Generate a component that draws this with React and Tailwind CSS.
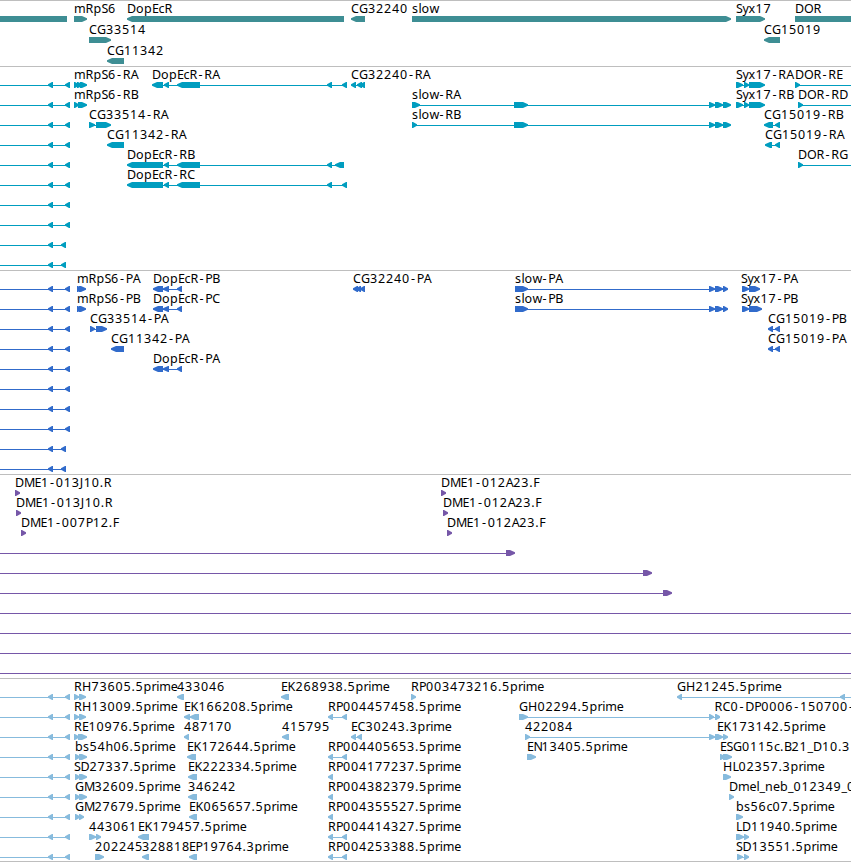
import React from 'react';

// Horizontal advance of each character used in the feature labels
const ADVANCE = {
  A: 7.5, B: 7.5, C: 8, D: 9, E: 6.5, F: 6.5, G: 9, H: 9.5, J: 4, K: 8, L: 6, M: 10.5,
  O: 9.5, P: 7, R: 8, S: 6.5, b: 8, c: 6, e: 7, h: 8, i: 3, l: 3, m: 11.5, n: 8,
  o: 8, p: 8, r: 4.8, s: 6.5, w: 9, x: 7, y: 6, '-': 6.8, '.': 4, _: 5.5
};

const R = 1;
const L = -1;

// feature: [label, label x, direction, exons]
const left = [null, 0, L, [[-20, -10], [48, 53], [65, 70]]];
const leftShort = [null, 0, L, [[-20, -10], [48, 53], [61, 66]]];
const slowTail = [[709, 715], [715, 723], [723, 731]];
const slowTailCds = [[709, 715], [715, 723], [723, 728]];
const syxExons = [[736, 743], [744, 749], [749, 765]];
const jump = [[328, 333], [342, 347]];
const through = [null, 0, R, [[-20, -10], [870, 880]]];

const tracks = [
  {
    name: 'genes',
    color: '#3e8e94',
    height: 'h-[66px]',
    rowHeight: 'h-[21px]',
    rows: [
      [
        [null, 0, L, [[-20, 67]]],
        ['mRpS6', 74, R, [[74, 87]]],
        ['DopEcR', 127, L, [[127, 344]]],
        ['CG32240', 351, L, [[351, 365]]],
        ['slow', 412, R, [[412, 731]]],
        ['Syx17', 736, R, [[736, 765]]],
        ['DOR', 795, R, [[795, 880]]]
      ],
      [
        ['CG33514', 89, R, [[89, 111]]],
        ['CG15019', 764, L, [[764, 780]]]
      ],
      [['CG11342', 107, L, [[107, 124]]]]
    ]
  },
  {
    name: 'transcripts',
    color: '#009dbf',
    height: 'h-[204px]',
    rowHeight: 'h-5',
    rows: [
      [
        left,
        ['mRpS6-RA', 74, R, [[74, 79], [77, 83], [80, 87]]],
        ['DopEcR-RA', 152, L, [[152, 163], [164, 169], [177, 200], [327, 332], [342, 347]]],
        ['CG32240-RA', 351, L, [[351, 356], [357, 362], [360, 365]]],
        ['Syx17-RA', 736, R, syxExons],
        ['DOR-RE', 795, R, [[795, 800], [870, 880]]]
      ],
      [
        left,
        ['mRpS6-RB', 74, R, [[74, 79], [78, 87]]],
        ['slow-RA', 412, R, [[412, 420], [514, 528], ...slowTail]],
        ['Syx17-RB', 736, R, syxExons],
        ['DOR-RD', 798, R, [[798, 803], [870, 880]]]
      ],
      [
        left,
        ['CG33514-RA', 89, R, [[89, 95], [96, 111]]],
        ['slow-RB', 412, R, [[412, 417], [514, 528], ...slowTail]],
        ['CG15019-RB', 764, L, [[764, 773], [775, 780]]]
      ],
      [
        left,
        ['CG11342-RA', 107, L, [[107, 124]]],
        ['CG15019-RA', 765, L, [[765, 772], [775, 780]]]
      ],
      [
        left,
        ['DopEcR-RB', 127, L, [[127, 163], [164, 169], [177, 200], [327, 332], [335, 344]]],
        ['DOR-RG', 798, R, [[798, 803], [870, 880]]]
      ],
      [
        left,
        ['DopEcR-RC', 127, L, [[127, 163], [164, 169], [177, 200], [327, 332], [342, 347]]]
      ],
      [left],
      [left],
      [leftShort],
      [leftShort]
    ]
  },
  {
    name: 'cds',
    color: '#316bcb',
    height: 'h-[204px]',
    rowHeight: 'h-5',
    rows: [
      [
        left,
        ['mRpS6-PA', 77, R, [[77, 82], [79, 86]]],
        ['DopEcR-PB', 153, L, [[153, 163], [163, 169], [177, 182]]],
        ['CG32240-PA', 353, L, [[353, 358], [356, 361], [360, 365]]],
        ['slow-PA', 515, R, [[515, 528], ...slowTailCds]],
        ['Syx17-PA', 741, R, [[742, 749], [749, 760]]]
      ],
      [
        left,
        ['mRpS6-PB', 77, R, [[77, 82], [79, 86]]],
        ['DopEcR-PC', 153, L, [[153, 163], [163, 169], [177, 182]]],
        ['slow-PB', 515, R, [[515, 528], ...slowTailCds]],
        ['Syx17-PB', 741, R, [[742, 749], [749, 762]]]
      ],
      [
        left,
        ['CG33514-PA', 90, R, [[90, 95], [96, 107]]],
        ['CG15019-PB', 768, L, [[768, 773], [775, 780]]]
      ],
      [
        left,
        ['CG11342-PA', 111, L, [[111, 124]]],
        ['CG15019-PA', 768, L, [[768, 773], [775, 780]]]
      ],
      [
        left,
        ['DopEcR-PA', 153, L, [[153, 163], [163, 169], [177, 182]]]
      ],
      [left],
      [left],
      [left],
      [leftShort],
      [leftShort]
    ]
  },
  {
    name: 'clones',
    color: '#7657a8',
    height: 'h-[204px]',
    rowHeight: 'h-5',
    rows: [
      [
        ['DME1-013J10.R', 15, R, [[15, 20]]],
        ['DME1-012A23.F', 441, R, [[441, 446]]]
      ],
      [
        ['DME1-013J10.R', 16, R, [[16, 21]]],
        ['DME1-012A23.F', 443, R, [[443, 448]]]
      ],
      [
        ['DME1-007P12.F', 21, R, [[21, 26]]],
        ['DME1-012A23.F', 447, R, [[447, 452]]]
      ],
      [[null, 0, R, [[-20, -10], [506, 515]]]],
      [[null, 0, R, [[-20, -10], [643, 652]]]],
      [[null, 0, R, [[-20, -10], [663, 672]]]],
      [through],
      [through],
      [through],
      [through]
    ]
  },
  {
    name: 'ests',
    color: '#87bbdd',
    height: 'h-[183px]',
    rowHeight: 'h-5',
    rows: [
      [
        left,
        ['RH73605.5prime', 74, R, [[74, 79], [79, 86]]],
        ['433046', 177, L, [[177, 184]]],
        ['EK268938.5prime', 281, L, [[281, 289]]],
        ['RP003473216.5prime', 411, R, [[411, 416]]],
        ['GH21245.5prime', 677, L, [[677, 682], [840, 845], [870, 880]]]
      ],
      [
        left,
        ['RH13009.5prime', 74, R, [[74, 79], [79, 86]]],
        ['EK166208.5prime', 184, L, [[184, 190], [190, 199]]],
        ['RP004457458.5prime', 328, L, jump],
        ['GH02294.5prime', 519, R, [[519, 528], [709, 714], [715, 720]]],
        ['RC0-DP0006-150700-', 714.5, R, [[715, 720]]]
      ],
      [
        left,
        ['RE10976.5prime', 74, R, [[74, 79], [78, 87]]],
        ['487170', 184, L, [[184, 189]]],
        ['415795', 282, L, [[282, 289]]],
        ['EC30243.3prime', 351, L, [[351, 356], [357, 362]]],
        ['422084', 525, R, [[525, 530], [709, 715], [715, 722]]],
        ['EK173142.5prime', 717, R, [[717, 723], [723, 728]]]
      ],
      [
        left,
        ['bs54h06.5prime', 75, R, [[75, 80], [79, 87]]],
        ['EK172644.5prime', 187, L, [[187, 196]]],
        ['RP004405653.5prime', 328, L, jump],
        ['EN13405.5prime', 527, R, [[527, 536]]],
        ['ESG0115c.B21_D10.3', 720, R, [[720, 725], [723, 732]]]
      ],
      [
        left,
        ['SD27337.5prime', 74, R, [[75, 80], [79, 87]]],
        ['EK222334.5prime', 188, L, [[188, 197]]],
        ['RP004177237.5prime', 328, L, [[328, 333]]],
        ['HL02357.3prime', 723, R, [[723, 731]]]
      ],
      [
        left,
        ['GM32609.5prime', 75, R, [[75, 80], [79, 87]]],
        ['346242', 188, L, [[188, 197]]],
        ['RP004382379.5prime', 328, L, [[328, 333]]],
        ['Dmel_neb_012349_0', 729, R, [[729, 734]]]
      ],
      [
        left,
        ['GM27679.5prime', 75, R, [[75, 80], [79, 84]]],
        ['EK065657.5prime', 189, L, [[189, 197]]],
        ['RP004355527.5prime', 328, L, [[328, 333]]],
        ['bs56c07.5prime', 736, R, [[736, 743]]]
      ],
      [
        left,
        ['443061', 89, R, [[89, 96], [96, 101]]],
        ['EK179457.5prime', 138, L, [[138, 149]]],
        ['RP004414327.5prime', 328, L, jump],
        ['LD11940.5prime', 736, R, [[736, 744], [744, 749]]]
      ],
      [
        left,
        ['202245', 95, R, [[95, 104]]],
        ['328818', 142, L, [[142, 149]]],
        ['EP19764.3prime', 189, L, [[189, 197]]],
        ['RP004253388.5prime', 328, L, jump],
        ['SD13551.5prime', 736, R, [[737, 743], [744, 749]]]
      ]
    ]
  }
];

const charPositions = (label, start) => {
  let x = start;
  return label
    .split('')
    .map((ch) => {
      // centre the hyphen in its wide advance
      const pos = ch === '-' ? x + 0.9 : x;
      x += ADVANCE[ch] || 8;
      return pos;
    })
    .join(' ');
};

const exonPoints = (start, end, direction) => {
  const head = Math.min(6, end - start);
  if (direction === L) {
    return `${end},15 ${start + head - 1},15 ${start},17.2 ${start},18.8 ${start + head - 1},21 ${end},21`;
  }
  return `${start},15 ${end - head + 1},15 ${end},17.2 ${end},18.8 ${end - head + 1},21 ${start},21`;
};

const Feature = ({ feature }) => {
  const [label, x, direction, exons] = feature;
  const first = exons[0][0];
  const last = exons[exons.length - 1][1];

  return (
    <g>
      {exons.length > 1 && (
        <rect x={first + 1} y="18" width={last - first - 2} height="1" />
      )}
      {exons.map(([start, end]) => (
        <polygon key={start} points={exonPoints(start, end, direction)} />
      ))}
      {label && (
        <text x={charPositions(label, x)} y="12" className="fill-black">
          {label}
        </text>
      )}
    </g>
  );
};

const Track = ({ track }) => {
  return (
    <section className={`border-t border-[#bebebe] ${track.height}`}>
      {track.rows.map((row, i) => (
        <svg
          key={i}
          className={`block w-full overflow-visible text-[12.5px] ${track.rowHeight}`}
          fill={track.color}
        >
          {row.map((feature, j) => (
            <Feature key={j} feature={feature} />
          ))}
        </svg>
      ))}
    </section>
  );
};

const App = () => {
  return (
    <div className="w-[851px] h-[862px] overflow-hidden bg-white font-['Noto_Sans','Open_Sans',sans-serif]">
      {tracks.map((track) => (
        <Track key={track.name} track={track} />
      ))}
      <div className="border-t border-[#bebebe]"></div>
    </div>
  );
};

export default App;
